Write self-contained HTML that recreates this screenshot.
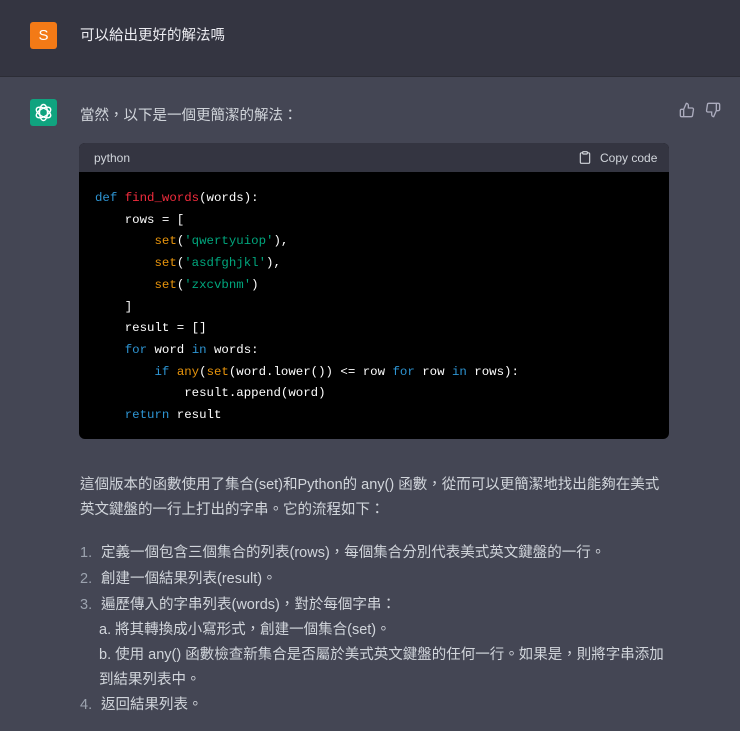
<!DOCTYPE html>
<html><head><meta charset="utf-8"><style>
*{margin:0;padding:0;box-sizing:border-box}
body{width:740px;height:731px;overflow:hidden;background:#444654;font-family:"Liberation Sans","Noto Sans CJK TC",sans-serif;color:#d1d5db;font-size:14.5px}
.top{position:absolute;left:0;top:0;width:740px;height:77px;background:#343541;border-bottom:1px solid #2c2d36}
.av{position:absolute;width:27px;height:27px;border-radius:3px}
.t{position:absolute;white-space:nowrap}
.code{position:absolute;left:79px;top:143px;width:590px;height:296px;border-radius:6px;overflow:hidden;background:#000}
.ch{height:29px;background:#343541;position:relative;font-size:12px;color:#d1d5db}
pre{font-family:"Liberation Mono",monospace;font-size:12.4px;line-height:21.7px;color:#fff;position:absolute;left:16px}
.k{color:#2e95d3}.f{color:#f22c3d}.b{color:#e9950c}.s{color:#00a67d}
.l{position:absolute;left:80px;white-space:nowrap;line-height:25px}
.n{color:#9ca3af;display:inline-block;width:21px}
</style></head><body>
<div class="top">
<div class="av" style="left:30px;top:22px;background:#f37a16;color:#fff;font-size:15px;text-align:center;line-height:27px">S</div>
<div class="t" style="left:80px;top:24px;color:#ececf1;font-size:14.5px">可以給出更好的解法嗎</div>
</div>
<div class="av" style="left:30px;top:99px;background:#10a37f">
<svg width="27" height="27" viewBox="0 0 27 27"><g fill="none" stroke="#fff" stroke-width="1.4"><ellipse cx="13.5" cy="13.5" rx="4" ry="8"/><ellipse cx="13.5" cy="13.5" rx="4" ry="8" transform="rotate(60 13.5 13.5)"/><ellipse cx="13.5" cy="13.5" rx="4" ry="8" transform="rotate(120 13.5 13.5)"/></g></svg></div>
<div class="t" style="left:80px;top:104px">當然，以下是一個更簡潔的解法：</div>
<svg style="position:absolute;left:679px;top:102px" width="16" height="16" viewBox="0 0 24 24" fill="none" stroke="#acacbe" stroke-width="2"><path d="M14 9V5a3 3 0 0 0-3-3l-4 9v11h11.3a2 2 0 0 0 2-1.7l1.4-9a2 2 0 0 0-2-2.3zM7 22H4a2 2 0 0 1-2-2v-7a2 2 0 0 1 2-2h3"/></svg>
<svg style="position:absolute;left:705px;top:102px" width="16" height="16" viewBox="0 0 24 24" fill="none" stroke="#acacbe" stroke-width="2"><path d="M10 15v4a3 3 0 0 0 3 3l4-9V2H5.7a2 2 0 0 0-2 1.7l-1.4 9a2 2 0 0 0 2 2.3zm7-13h2.7A2.3 2.3 0 0 1 22 4v7a2.3 2.3 0 0 1-2.3 2H17"/></svg>
<div class="code">
<div class="ch"><span style="position:absolute;left:15px;top:8px">python</span>
<svg style="position:absolute;left:499px;top:7px" width="14" height="15" viewBox="0 0 24 24" fill="none" stroke="#d1d5db" stroke-width="2"><path d="M16 4h2a2 2 0 0 1 2 2v14a2 2 0 0 1-2 2H6a2 2 0 0 1-2-2V6a2 2 0 0 1 2-2h2"/><rect x="8" y="2" width="8" height="4" rx="1"/></svg>
<span style="position:absolute;left:521px;top:8px">Copy code</span></div>
<pre style="top:45px"><span class="k">def</span> <span class="f">find_words</span>(words):
    rows = [
        <span class="b">set</span>(<span class="s">'qwertyuiop'</span>),
        <span class="b">set</span>(<span class="s">'asdfghjkl'</span>),
        <span class="b">set</span>(<span class="s">'zxcvbnm'</span>)
    ]
    result = []
    <span class="k">for</span> word <span class="k">in</span> words:
        <span class="k">if</span> <span class="b">any</span>(<span class="b">set</span>(word.lower()) &lt;= row <span class="k">for</span> row <span class="k">in</span> rows):
            result.append(word)
    <span class="k">return</span> result</pre>
</div>
<div class="l" style="top:473px">這個版本的函數使用了集合(set)和Python的 any() 函數，從而可以更簡潔地找出能夠在美式</div>
<div class="l" style="top:498px">英文鍵盤的一行上打出的字串。它的流程如下：</div>
<div class="l" style="top:541px"><span class="n">1.</span>定義一個包含三個集合的列表(rows)，每個集合分別代表美式英文鍵盤的一行。</div>
<div class="l" style="top:567px"><span class="n">2.</span>創建一個結果列表(result)。</div>
<div class="l" style="top:593px"><span class="n">3.</span>遍歷傳入的字串列表(words)，對於每個字串：</div>
<div class="l" style="top:618px;left:99px">a. 將其轉換成小寫形式，創建一個集合(set)。</div>
<div class="l" style="top:643px;left:99px">b. 使用 any() 函數檢查新集合是否屬於美式英文鍵盤的任何一行。如果是，則將字串添加</div>
<div class="l" style="top:668px;left:99px">到結果列表中。</div>
<div class="l" style="top:693px"><span class="n">4.</span>返回結果列表。</div>
</body></html>
